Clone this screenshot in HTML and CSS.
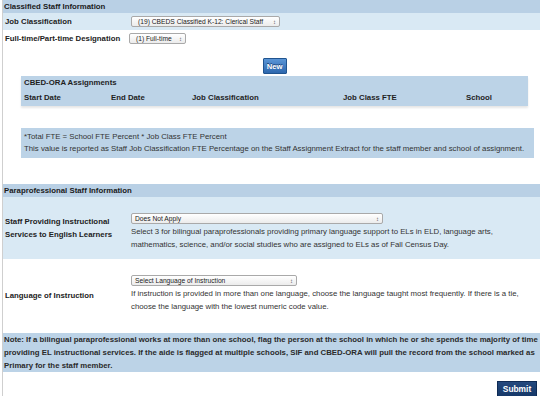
FILE: index.html
```html
<!DOCTYPE html>
<html lang="en">
<head>
    <meta charset="UTF-8">
    <title>Staff Information</title>
    <link rel="stylesheet" href="styles.css">
</head>
<body>
<div class="page">
    <div class="section-head">Classified Staff Information</div>

    <div class="row alt">
        <div class="label">Job Classification</div>
        <div class="field">
            <span class="select sel-job">(19) CBEDS Classified K-12: Clerical Staff<span class="arrows">&#8597;</span></span>
        </div>
    </div>
    <div class="row">
        <div class="label">Full-time/Part-time Designation</div>
        <div class="field">
            <span class="select sel-fte">(1) Full-time<span class="arrows">&#8597;</span></span>
        </div>
    </div>

    <div class="actions">
        <button class="btn-new">New</button>
    </div>

    <div class="panel assignments">
        <div class="panel-title">CBED-ORA Assignments</div>
        <div class="cols">
            <span>Start Date</span>
            <span>End Date</span>
            <span>Job Classification</span>
            <span>Job Class FTE</span>
            <span>School</span>
        </div>
    </div>

    <div class="panel info">
        <p>*Total FTE = School FTE Percent * Job Class FTE Percent</p>
        <p>This value is reported as Staff Job Classification FTE Percentage on the Staff Assignment Extract for the staff member and school of assignment.</p>
    </div>

    <div class="section-head">Paraprofessional Staff Information</div>

    <div class="row alt tall">
        <div class="label">Staff Providing Instructional Services to English Learners</div>
        <div class="field">
            <span class="select sel-el">Does Not Apply<span class="arrows">&#8597;</span></span>
            <p class="desc">Select 3 for bilingual paraprofessionals providing primary language support to ELs in ELD, language arts, mathematics, science, and/or social studies who are assigned to ELs as of Fall Census Day.</p>
        </div>
    </div>
    <div class="row tall lang">
        <div class="label">Language of Instruction</div>
        <div class="field">
            <span class="select sel-lang">Select Language of Instruction<span class="arrows">&#8597;</span></span>
            <p class="desc">If instruction is provided in more than one language, choose the language taught most frequently. If there is a tie, choose the language with the lowest numeric code value.</p>
        </div>
    </div>

    <div class="note">Note: If a bilingual paraprofessional works at more than one school, flag the person at the school in which he or she spends the majority of time providing EL instructional services. If the aide is flagged at multiple schools, SIF and CBED-ORA will pull the record from the school marked as Primary for the staff member.</div>

    <div class="submit-row">
        <button class="btn-submit">Submit</button>
    </div>
</div>
</body>
</html>
```

FILE: styles.css
```css
body {
    margin: 0;
    background: #fff;
    font-family: "Liberation Sans", Arial, sans-serif;
    font-size: 7.8px;
    color: #333;
}
.page {
    margin-left: 2px;
    border-left: 1px solid #cfcfcf;
    min-height: 396px;
}
.section-head {
    background: #b9d0e5;
    color: #1a1a1a;
    font-weight: bold;
    font-size: 7.8px;
    height: 13px;
    line-height: 13px;
    padding-left: 1px;
}
.row {
    display: flex;
    align-items: center;
    height: 17px;
}
.row.alt {
    background: #d9e9f4;
}
.label {
    width: 126px;
    padding-left: 2px;
    font-weight: bold;
    font-size: 7.8px;
    color: #222;
    line-height: 13px;
    flex-shrink: 0;
}
.field {
    flex: 1;
}
.select {
    display: inline-flex;
    align-items: center;
    box-sizing: border-box;
    height: 11px;
    padding: 0 3px 0 6px;
    border: 1px solid #a9a9a9;
    border-radius: 2px;
    background: linear-gradient(#fff, #ececec);
    font-size: 6.7px;
    color: #222;
    white-space: nowrap;
}
.arrows {
    margin-left: auto;
    font-size: 6px;
    color: #555;
}
.sel-job { width: 149px; }
.sel-fte { width: 57px; margin-left: -2px; }
.sel-el { width: 252px; padding-left: 3px; }
.sel-lang { width: 166px; padding-left: 3px; }

.actions {
    text-align: center;
    padding-top: 11px;
    padding-right: 8px;
    height: 17px;
}
.btn-new {
    height: 16px;
    width: 24px;
    padding: 0;
    border: 1px solid #20548f;
    border-radius: 1px;
    background: linear-gradient(#5a95d6, #2d67ae);
    color: #fff;
    font-family: "Liberation Sans", Arial, sans-serif;
    font-weight: bold;
    font-size: 7.6px;
    text-shadow: 0 -1px 0 #1b4377;
    margin-left: 14px;
}
.panel {
    margin-left: 18px;
    width: 507px;
    background: #bcd3e7;
}
.assignments {
    height: 30px;
    margin-top: 1px;
    box-shadow: 0 2px 2px #e6e6e6;
    font-weight: bold;
    color: #1e1e1e;
}
.panel-title {
    padding: 0 3px;
    height: 13px;
    line-height: 13px;
}
.cols {
    display: grid;
    grid-template-columns: 87px 81px 151px 123px auto;
    padding: 0 3px;
    height: 17px;
    line-height: 17px;
}
.info {
    margin-top: 22px;
    padding: 3px 3px 0;
    height: 27px;
}
.info p {
    margin: 0;
    line-height: 12px;
}
.info + .section-head {
    margin-top: 26px;
}
.row.tall {
    height: 62px;
    align-items: stretch;
}
.row.tall .label {
    align-self: center;
    width: 123px;
    padding-right: 3px;
}
.row.tall .field {
    padding-top: 16px;
}
.row.lang {
    height: 72px;
}
.desc {
    margin: 0;
    max-width: 392px;
    line-height: 13px;
    padding-top: 1px;
}
.note {
    margin-top: 2px;
    background: #bcd3e7;
    font-weight: bold;
    color: #2a2a2a;
    line-height: 13px;
    padding: 0 1px;
}
.submit-row {
    text-align: right;
    padding: 9px 3px 0 0;
}
.btn-submit {
    height: 16px;
    width: 40px;
    padding: 0;
    border: 1px solid #0f2b55;
    background: linear-gradient(#24497e, #163868);
    color: #fff;
    font-family: "Liberation Sans", Arial, sans-serif;
    font-weight: bold;
    font-size: 8.4px;
}
```
